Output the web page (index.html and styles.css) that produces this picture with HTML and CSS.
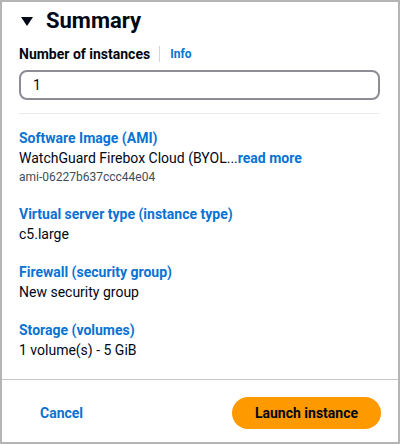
FILE: index.html
```html
<!DOCTYPE html>
<html lang="en">
<head>
    <meta charset="UTF-8">
    <meta name="viewport" content="width=device-width, initial-scale=1.0">
    <title>Summary</title>
    <link rel="stylesheet" href="styles.css">
</head>
<body>

    <div class="panel">
        <div class="panel-body">
            <h2 class="summary-title">
                <svg class="caret" width="12" height="10" viewBox="0 0 12 10"><polygon points="0,0 12,0 6,9" fill="#000716"/></svg>
                Summary
            </h2>

            <div class="field-label">
                <span>Number of instances</span>
                <span class="label-sep"></span>
                <a href="#" class="info-link">Info</a>
            </div>
            <input type="text" class="count-input" value="1">

            <hr class="divider">

            <!-- Instance details -->
            <div class="detail">
                <a href="#" class="detail-title">Software Image (AMI)</a>
                <p class="detail-value">WatchGuard Firebox Cloud (BYOL...<a href="#" class="read-more">read more</a></p>
                <p class="detail-sub">ami-06227b637ccc44e04</p>
            </div>

            <div class="detail">
                <a href="#" class="detail-title">Virtual server type (instance type)</a>
                <p class="detail-value">c5.large</p>
            </div>

            <div class="detail">
                <a href="#" class="detail-title">Firewall (security group)</a>
                <p class="detail-value">New security group</p>
            </div>

            <div class="detail">
                <a href="#" class="detail-title">Storage (volumes)</a>
                <p class="detail-value">1 volume(s) - 5 GiB</p>
            </div>
        </div>

        <div class="panel-footer">
            <a href="#" class="cancel-link">Cancel</a>
            <button type="button" class="launch-btn">Launch instance</button>
        </div>
    </div>

</body>
</html>
```

FILE: styles.css
```css
/* Basic Reset */
* {
    margin: 0;
    padding: 0;
    box-sizing: border-box;
}

body {
    font-family: Roboto, "Open Sans", Arial, sans-serif;
    background-color: #ffffff;
    color: #000716;
    font-size: 14px;
    line-height: 20px;
}

.panel {
    width: 400px;
    height: 444px;
    border: 2px solid #b4b4b4;
    display: flex;
    flex-direction: column;
}

.panel-body {
    padding: 4px 18px 0 17px;
    flex: 1;
}

.summary-title {
    display: flex;
    align-items: center;
    gap: 13px;
    font-size: 22px;
    line-height: 30px;
    font-weight: 700;
    padding-left: 2px;
}

.caret {
    margin-top: 2px;
}

.field-label {
    display: flex;
    align-items: center;
    margin-top: 8px;
    font-weight: 700;
}

.label-sep {
    width: 1px;
    height: 16px;
    background: #d1d5db;
    margin: 0 10px 0 9px;
}

a {
    color: #0972d3;
    text-decoration: none;
    font-weight: 700;
}

.info-link {
    font-size: 12px;
}

.count-input {
    display: block;
    width: 100%;
    height: 30px;
    margin-top: 6px;
    padding: 0 12px;
    border: 2px solid #8c8c94;
    border-radius: 8px;
    font-family: inherit;
    font-size: 14px;
    color: #000716;
}

.divider {
    border: none;
    border-top: 1px solid #e9ebed;
    margin: 13px 0 14px;
}

.detail {
    margin-bottom: 18px;
}

.detail:nth-child(n+6) {
    margin-top: 2px;
}

.detail-title {
    display: block;
}

.detail-sub {
    font-size: 12px;
    line-height: 18px;
    color: #414d5c;
}

.panel-footer {
    border-top: 1px solid #c6c6cd;
    height: 63px;
    display: flex;
    align-items: center;
    justify-content: space-between;
    padding: 3px 17px 0 38px;
}

.launch-btn {
    background-color: #ff9900;
    color: #000716;
    border: none;
    border-radius: 16px;
    height: 32px;
    padding: 0 23px;
    font-family: inherit;
    font-size: 14px;
    font-weight: 700;
    cursor: pointer;
}
```
